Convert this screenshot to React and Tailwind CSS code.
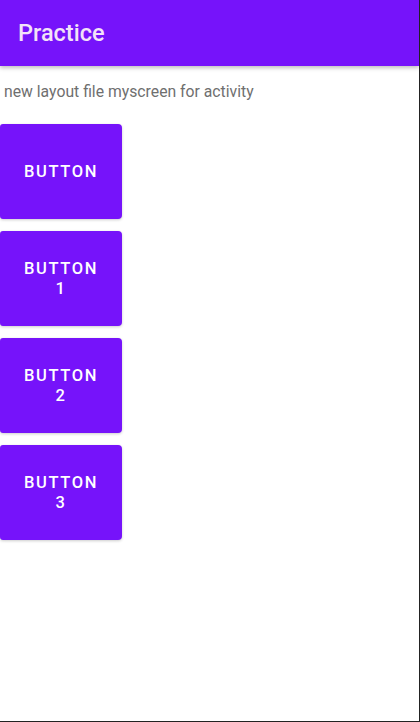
export default function App() {
  const buttons = ['BUTTON', 'BUTTON 1', 'BUTTON 2', 'BUTTON 3']

  return (
    <div className="w-[420px] h-[722px] bg-white border-r border-b border-[#222] flex flex-col font-['Roboto',sans-serif] overflow-hidden">
      {/* App bar */}
      <div className="h-[66px] shrink-0 bg-[#7613fa] flex items-center px-[18px] pt-[2px] shadow-[0_2px_4px_rgba(0,0,0,0.25)] z-10">
        <span className="text-[23.5px] font-medium text-[#f3e2f8]">Practice</span>
      </div>

      <p className="mt-[15px] ml-[4px] text-[15.75px] leading-[22px] text-[#6f6f6f]">
        new layout file myscreen for activity
      </p>

      <div className="mt-[21px] flex flex-col gap-[12px]">
        {buttons.map((label) => (
          <button
            key={label}
            className="w-[122px] h-[95px] bg-[#7613fa] rounded-r-[4px] rounded-l-[3px] shadow-[0_1px_3px_rgba(0,0,0,0.2)] flex items-center justify-center px-[20px] text-white text-[16.5px] font-medium leading-[20px] tracking-[0.1em] text-center"
          >
            {label}
          </button>
        ))}
      </div>
    </div>
  )
}
